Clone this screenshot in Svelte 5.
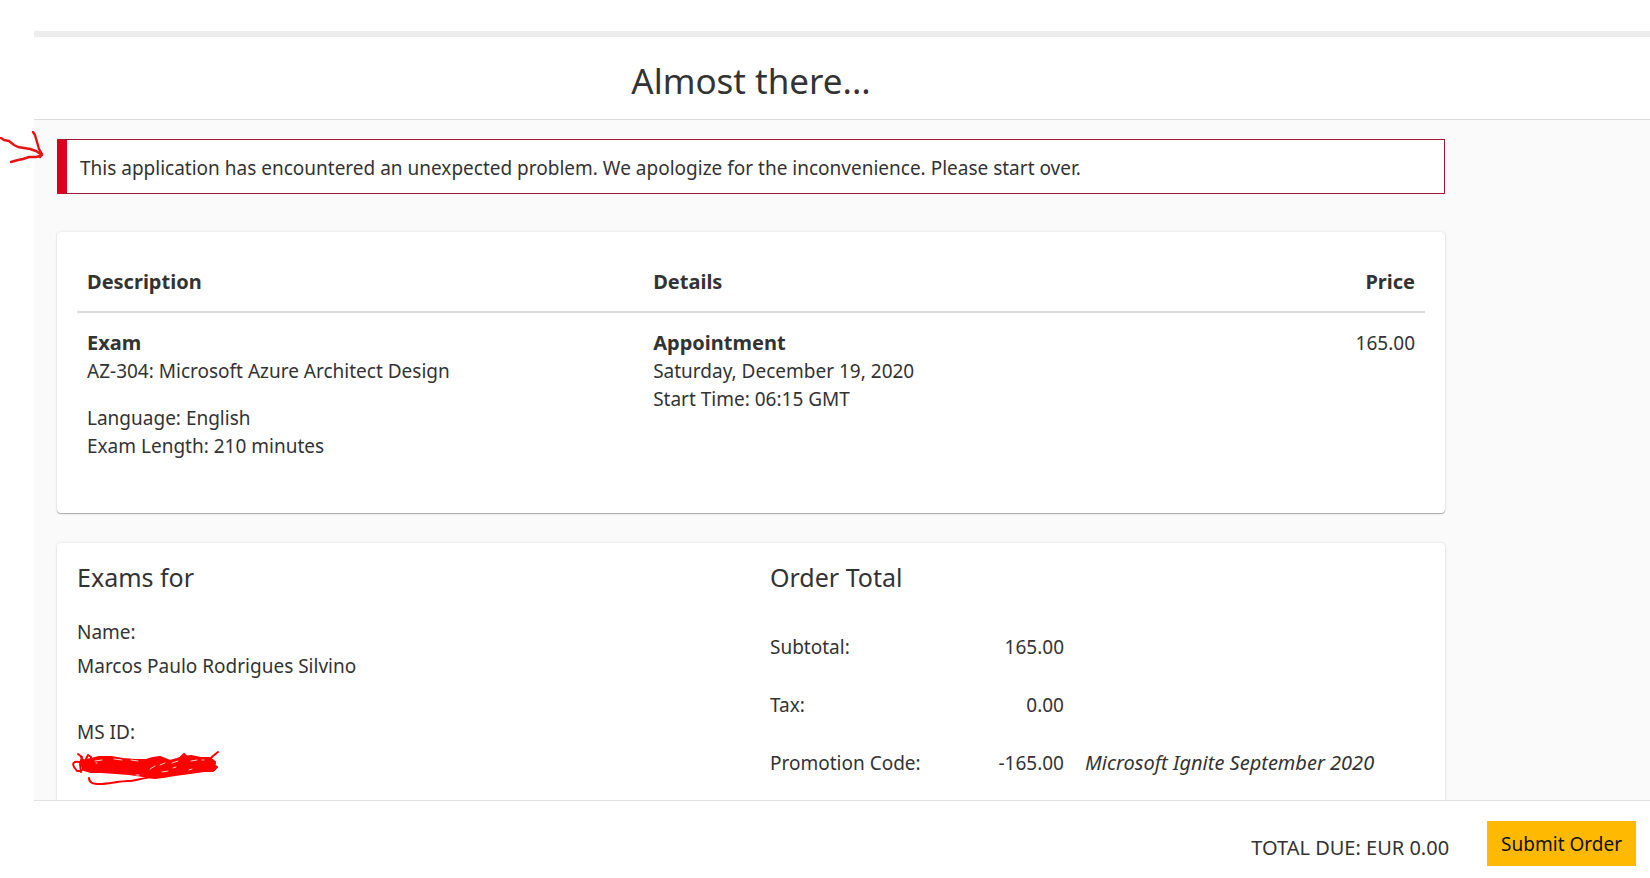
<script lang="ts">
  interface OrderItem {
    type: string;
    name: string;
    language: string;
    length: string;
    date: string;
    startTime: string;
    price: string;
  }

  interface TotalRow {
    label: string;
    amount: string;
    note?: string;
  }

  const items: OrderItem[] = [
    {
      type: "Exam",
      name: "AZ-304: Microsoft Azure Architect Design",
      language: "English",
      length: "210 minutes",
      date: "Saturday, December 19, 2020",
      startTime: "06:15 GMT",
      price: "165.00",
    },
  ];

  const totals: TotalRow[] = [
    { label: "Subtotal:", amount: "165.00" },
    { label: "Tax:", amount: "0.00" },
    {
      label: "Promotion Code:",
      amount: "-165.00",
      note: "Microsoft Ignite September 2020",
    },
  ];

  let error = $state(
    "This application has encountered an unexpected problem. We apologize for the inconvenience. Please start over.",
  );
</script>

<div class="page">
  <div class="top-bar"></div>

  <header class="page-header">
    <h1>Almost there...</h1>
  </header>

  <main class="content">
    <div class="container">
      {#if error}
        <div class="alert" role="alert">
          {error}
          <svg class="arrow" viewBox="0 0 46 36" aria-hidden="true">
            <path
              d="M2 7l3 2 5 1 5 4 4 2 6 1 6 1 6 2 6 4M34 1l2 3 2 7 2 7 3 5-2 3M12 31l7-2 5-1 6-2 7 0 4-1 2-2"
            />
          </svg>
        </div>
      {/if}

      <section class="card items-card">
        <table class="items">
          <thead>
            <tr>
              <th class="description">Description</th>
              <th class="details">Details</th>
              <th class="price">Price</th>
            </tr>
          </thead>
          <tbody>
            {#each items as item}
              <tr>
                <td>
                  <strong>{item.type}</strong>
                  <div>{item.name}</div>
                  <div class="item-extra">
                    <div>Language: {item.language}</div>
                    <div>Exam Length: {item.length}</div>
                  </div>
                </td>
                <td>
                  <strong>Appointment</strong>
                  <div>{item.date}</div>
                  <div>Start Time: {item.startTime}</div>
                </td>
                <td class="price">{item.price}</td>
              </tr>
            {/each}
          </tbody>
        </table>
      </section>

      <section class="card summary">
        <div class="candidate">
          <h2>Exams for</h2>
          <dl>
            <dt>Name:</dt>
            <dd>Marcos Paulo Rodrigues Silvino</dd>
            <dt>MS ID:</dt>
            <dd>
              <svg class="scribble" viewBox="0 0 150 38" aria-hidden="true">
                <path
                  class="fill"
                  d="M10 12L20 10 28 8 40 8 52 10 64 11 75 11 82 9 89 8 94 10 99 12 106 10 112 8 120 7 130 9 138 9 141 11 144 14 143 18 144 20 140 22 133 22 119 24 104 26 92 28 84 29 72 27 58 25 45 24 30 23 20 23 13 21 11 17z"
                />
                <path
                  d="M8 13C3 12 1 14 3 18L6 22 10 22 13 19M7 5L11 8 9 15 10 23M10 8L14 14M15 10L17 6 20 8 20 11M110 8L113 5 116 8M138 11L142 7 147 3M140 10L144 13 142 16 146 18 142 22M18 29C18 34 22 35 29 35S50 32 57 32 73 28 86 28"
                />
                <path
                  class="gaps"
                  d="M24 12L31 11M25 14L26 14M43 10L51 11M60 11L67 12M79 20L84 17M89 16L94 14M91 23L97 22M101 14L107 12M102 19L105 18M120 12L126 11M131 11L133 11M65 26L68 26M118 21L121 20"
                />
              </svg>
            </dd>
          </dl>
        </div>

        <div class="order-total">
          <h2>Order Total</h2>
          <table class="totals">
            <tbody>
              {#each totals as row}
                <tr>
                  <th scope="row">{row.label}</th>
                  <td class="amount">{row.amount}</td>
                  <td class="note">{row.note ?? ""}</td>
                </tr>
              {/each}
            </tbody>
          </table>
        </div>
      </section>
    </div>
  </main>

  <footer class="page-footer">
    <span class="total-due">TOTAL DUE: EUR 0.00</span>
    <button type="button" class="submit">Submit Order</button>
  </footer>
</div>

<style>
  :global(body) {
    background-color: #fff;
  }

  .page {
    display: flex;
    flex-direction: column;
    height: 100vh;
    box-sizing: border-box;
    padding: 31px 0 0 34px;
    overflow: hidden;
    color: #333;
    font-family: Tahoma, "Noto Sans", sans-serif;
    font-size: 19px;
    line-height: 28px;
  }

  .top-bar {
    flex: none;
    height: 6px;
    background-color: #ededed;
  }

  .page-header {
    flex: none;
    padding: 24px 23px 18px;
    border-bottom: 1px solid #ddd;
  }
  .page-header h1 {
    max-width: 1388px;
    margin: 0;
    font-size: 35px;
    font-weight: 400;
    line-height: 40px;
    text-align: center;
  }

  .content {
    flex: 1;
    min-height: 0;
    padding: 19px 23px 0;
    background-color: #fafafa;
  }
  .container {
    max-width: 1388px;
  }

  .alert {
    position: relative;
    padding: 14px 13px 11px;
    margin-bottom: 38px;
    background-color: #fff;
    border: 1px solid #9d1c33;
    border-left: 10px solid #db0020;
  }
  /* hand-drawn arrow pointing at the message */
  .arrow {
    position: absolute;
    top: -9px;
    left: -68px;
    width: 46px;
    height: 36px;
    fill: none;
    stroke: #e81313;
    stroke-width: 2.4;
    stroke-linecap: round;
    stroke-linejoin: round;
  }

  .card {
    padding: 20px;
    margin-bottom: 30px;
    background-color: #fff;
    border-radius: 4px;
    box-shadow:
      0 1px 1px rgba(0, 0, 0, 0.3),
      0 0 3px rgba(0, 0, 0, 0.12);
  }
  .items-card {
    padding-bottom: 53px;
  }

  .items {
    width: 100%;
    border-collapse: collapse;
    table-layout: fixed;
  }
  .items th,
  .items td {
    box-sizing: border-box;
    padding: 16px 10px 0;
    text-align: left;
    vertical-align: top;
  }
  .items th {
    padding-bottom: 15px;
    border-bottom: 2px solid #ddd;
  }
  .items th,
  .items strong {
    font-size: 20px;
  }
  .items .description,
  .items .details {
    width: 42%;
  }
  .items .price {
    width: 16%;
    text-align: right;
  }
  .item-extra {
    margin-top: 19px;
  }

  .summary {
    display: grid;
    grid-template-columns: 693px 1fr;
  }
  .summary h2 {
    margin: 0;
    font-size: 25px;
    font-weight: 400;
    line-height: 28px;
  }

  dl {
    margin: 24px 0 0;
    line-height: 34px;
  }
  dd {
    margin: 0 0 32px;
  }
  .scribble {
    display: block;
    width: 150px;
    height: 38px;
    margin-left: -6px;
    fill: none;
    stroke: #f00;
    stroke-width: 2;
    stroke-linecap: round;
    stroke-linejoin: round;
  }
  .scribble .fill {
    fill: #f00;
  }
  .scribble .gaps {
    stroke: #fcc;
    stroke-width: 1;
  }

  .totals {
    margin-top: 27px;
    border-collapse: collapse;
  }
  .totals th,
  .totals td {
    padding: 15px 0;
    font-weight: 400;
    text-align: left;
    white-space: nowrap;
  }
  .totals th {
    width: 194px;
  }
  .totals .amount {
    width: 100px;
    text-align: right;
  }
  .totals .note {
    padding-left: 21px;
    font-size: 20px;
    font-style: italic;
  }

  .page-footer {
    flex: none;
    display: flex;
    justify-content: flex-end;
    align-items: flex-end;
    gap: 38px;
    padding: 20px 14px 12px;
    background-color: #fff;
    border-top: 1px solid #e1e1e1;
  }
  .total-due {
    font-size: 20px;
    line-height: 36px;
  }
  .submit {
    padding: 9px 14px 7px;
    border: 0;
    background-color: #ffb900;
    color: #111;
    font: inherit;
    line-height: 29px;
    cursor: pointer;
  }
  .submit:hover {
    background-color: #f2b000;
  }
</style>
